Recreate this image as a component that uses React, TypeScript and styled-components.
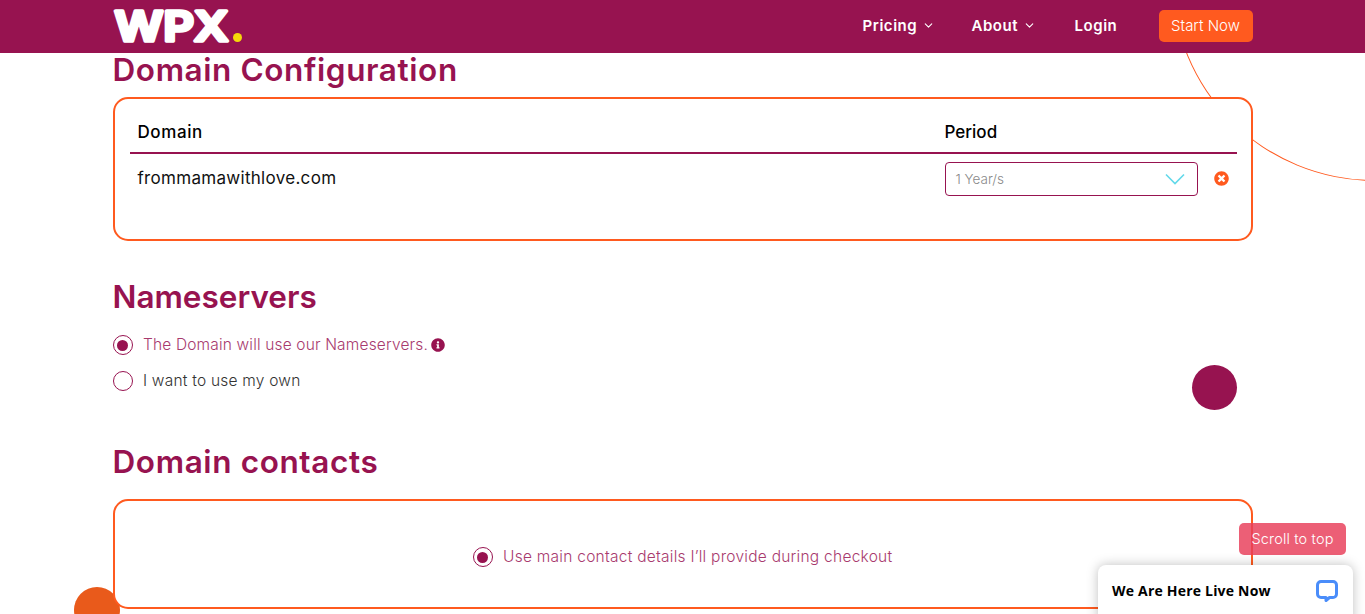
import React from "react";
import styled, { createGlobalStyle } from "styled-components";
import { FaTimesCircle, FaInfoCircle } from "react-icons/fa";
import { ChevronDown } from "lucide-react";

const PURPLE = "#971350";
const ORANGE = "#ff5a1f";
const SANS = `Inter, "Liberation Sans", sans-serif`;

const Global = createGlobalStyle`
  html, body { margin: 0; padding: 0; background: #fff; }
  body { font-family: ${SANS}; overflow: hidden; }
  * { box-sizing: border-box; }
`;

const Page = styled.div`
  position: relative;
  height: 614px;
  overflow: hidden;
`;
const Header = styled.header`
  position: relative;
  z-index: 3;
  height: 53px;
  background: ${PURPLE};
`;
const HeaderInner = styled.div`
  width: 1140px;
  height: 100%;
  margin: 0 auto;
  display: flex;
  align-items: center;
  justify-content: space-between;
`;
const Logo = styled.svg`
  display: block;
  width: 130px;
  height: 53px;
  overflow: visible;
`;
const Nav = styled.nav`
  display: flex;
  align-items: center;
  padding-bottom: 1px;
  margin-top: -1px;
`;
const NavItem = styled.a<{ $w: number }>`
  display: flex;
  align-items: center;
  gap: 5px;
  width: ${(p) => p.$w}px;
  color: #fff;
  font-size: 15px;
  font-weight: 600;
  letter-spacing: 0.55px;
`;
const StartButton = styled.a`
  display: flex;
  align-items: center;
  justify-content: center;
  width: 94px;
  height: 32px;
  border-radius: 5px;
  background: ${ORANGE};
  color: #fff;
  font-size: 15px;
  font-weight: 300;
`;
const Main = styled.main`
  position: relative;
  z-index: 2;
  width: 1140px;
  margin: 0 auto;
`;
const Heading = styled.h2<{ $mt?: number; $ls: number }>`
  margin: ${(p) => p.$mt ?? 0}px 0 0;
  color: ${PURPLE};
  font-size: 31.5px;
  line-height: 34px;
  font-weight: 600;
  letter-spacing: ${(p) => p.$ls}px;
`;
const Card = styled.section<{ $h: number; $mt: number }>`
  height: ${(p) => p.$h}px;
  margin-top: ${(p) => p.$mt}px;
  border: 2px solid ${ORANGE};
  border-radius: 15px;
  background: #fff;
`;
const DomainCard = styled(Card)`
  padding: 0 15px;
`;
const Grid = styled.div`
  display: grid;
  grid-template-columns: 807px 269px 1fr;
`;
const HeadCell = styled.div<{ $ls?: number }>`
  height: 55px;
  padding: 20px 8px 0;
  border-bottom: 2px solid ${PURPLE};
  color: #000;
  font-size: 17px;
  line-height: 26px;
  font-weight: 500;
  letter-spacing: ${(p) => p.$ls ?? 0}px;
`;
const Cell = styled.div<{ $pt: number }>`
  padding: ${(p) => p.$pt}px 8px 0;
  color: #111;
  font-size: 17px;
  line-height: 34px;
  letter-spacing: 0.3px;
`;
const Select = styled.div`
  width: 253px;
  height: 34px;
  padding: 0 12px 0 10px;
  display: flex;
  align-items: center;
  justify-content: space-between;
  border: 1px solid ${PURPLE};
  border-radius: 4px;
  color: #8a8a8a;
  font-size: 13.5px;
  font-weight: 300;
  letter-spacing: 0;
`;
const RemoveIcon = styled(FaTimesCircle)`
  display: block;
  width: 15px;
  height: 15px;
  color: ${ORANGE};
`;
const RadioList = styled.div`
  display: flex;
  flex-direction: column;
  gap: 16px;
  margin-top: 21px;
`;
const RadioRow = styled.label`
  display: flex;
  align-items: center;
  gap: 10.5px;
  height: 20px;
`;
const RadioMark = styled.span<{ $on?: boolean }>`
  position: relative;
  display: block;
  flex: none;
  width: 20px;
  height: 20px;
  border: 1.5px solid ${PURPLE};
  border-radius: 50%;
  background: #fff;
  &::after {
    content: "";
    display: ${(p) => (p.$on ? "block" : "none")};
    position: absolute;
    inset: 3.5px;
    border-radius: 50%;
    background: ${PURPLE};
  }
`;
const RadioText = styled.span<{ $on?: boolean; $ls: number }>`
  padding-bottom: 2px;
  color: ${(p) => (p.$on ? "#a83a6e" : "#333")};
  font-size: 15.5px;
  font-weight: 300;
  letter-spacing: ${(p) => p.$ls}px;
`;
const InfoIcon = styled(FaInfoCircle)`
  display: block;
  width: 14px;
  height: 14px;
  margin: -1px 0 0 -7px;
  color: ${PURPLE};
`;
const ContactCard = styled(Card)`
  display: flex;
  align-items: center;
  padding: 6px 0 0 358px;
`;
const Arc = styled.div`
  position: absolute;
  z-index: 1;
  left: 1172px;
  top: -223px;
  width: 405px;
  height: 404px;
  border: 1px solid ${ORANGE};
  border-radius: 50%;
`;
const Dot = styled.div<{ $x: number; $y: number; $d: number; $c: string }>`
  position: absolute;
  z-index: 1;
  left: ${(p) => p.$x}px;
  top: ${(p) => p.$y}px;
  width: ${(p) => p.$d}px;
  height: ${(p) => p.$d}px;
  border-radius: 50%;
  background: ${(p) => p.$c};
`;
const ScrollTop = styled.div`
  position: absolute;
  z-index: 4;
  left: 1239px;
  top: 523px;
  width: 107px;
  height: 32px;
  padding-bottom: 2px;
  display: flex;
  align-items: center;
  justify-content: center;
  border-radius: 5px;
  background: rgba(232, 62, 90, 0.83);
  color: #fff;
  font-size: 14.5px;
  font-weight: 300;
  letter-spacing: 0.15px;
`;
const Chat = styled.div`
  position: absolute;
  z-index: 5;
  left: 1098px;
  top: 565px;
  width: 255px;
  height: 60px;
  padding: 0 14px;
  display: flex;
  align-items: flex-start;
  justify-content: space-between;
  border-radius: 8px 8px 0 0;
  background: #fff;
  box-shadow: 0 0 12px rgba(0, 0, 0, 0.25);
`;
const ChatText = styled.span`
  margin-top: 16px;
  color: #000;
  font-family: "Open Sans", sans-serif;
  font-size: 14px;
  line-height: 20px;
  font-weight: 700;
  letter-spacing: 0.2px;
`;
const ChatIcon = styled.svg`
  display: block;
  width: 24px;
  height: 24px;
  margin-top: 13px;
`;

export default function App() {
  return (
    <Page>
      <Global />
      <Header>
        <HeaderInner>
          <Logo viewBox="0 0 130 53">
            <text
              x="1.5"
              y="40.5"
              fill="#fff"
              stroke="#fff"
              strokeWidth="3.5"
              strokeLinejoin="round"
              fontFamily="Inter, sans-serif"
              fontWeight="600"
              fontSize="41"
              textLength="114"
              lengthAdjust="spacingAndGlyphs"
            >
              WPX
            </text>
            <circle cx="124.5" cy="37.5" r="4.5" fill="#f5d90a" />
          </Logo>
          <Nav>
            <NavItem $w={109}>
              Pricing <ChevronDown size={13} strokeWidth={2} />
            </NavItem>
            <NavItem $w={103}>
              About <ChevronDown size={13} strokeWidth={2} />
            </NavItem>
            <NavItem $w={84}>Login</NavItem>
            <StartButton>Start Now</StartButton>
          </Nav>
        </HeaderInner>
      </Header>
      <Arc />
      <Dot $x={1192} $y={365} $d={45} $c={PURPLE} />
      <Dot $x={74} $y={587} $d={46} $c="#e95a1b" />
      <Main>
        <Heading $ls={0.6}>Domain Configuration</Heading>
        <DomainCard $h={144} $mt={10}>
          <Grid>
            <HeadCell $ls={0.6}>Domain</HeadCell>
            <HeadCell>Period</HeadCell>
            <HeadCell />
            <Cell $pt={7}>frommamawithlove.com</Cell>
            <Cell $pt={8}>
              <Select>
                1 Year/s
                <svg width="20" height="12" viewBox="0 0 20 12" fill="none">
                  <polyline points="1,1.5 10,10.5 19,1.5" stroke="#62d9ea" strokeWidth="1.6" />
                </svg>
              </Select>
            </Cell>
            <Cell $pt={17}>
              <RemoveIcon />
            </Cell>
          </Grid>
        </DomainCard>
        <Heading $mt={39} $ls={0}>Nameservers</Heading>
        <RadioList>
          <RadioRow>
            <RadioMark $on />
            <RadioText $on $ls={0.16}>The Domain will use our Nameservers.</RadioText>
            <InfoIcon />
          </RadioRow>
          <RadioRow>
            <RadioMark />
            <RadioText $ls={0.22}>I want to use my own</RadioText>
          </RadioRow>
        </RadioList>
        <Heading $mt={54} $ls={0.62}>Domain contacts</Heading>
        <ContactCard $h={110} $mt={20}>
          <RadioRow>
            <RadioMark $on />
            <RadioText $on $ls={0.26}>Use main contact details I’ll provide during checkout</RadioText>
          </RadioRow>
        </ContactCard>
      </Main>
      <ScrollTop>Scroll to top</ScrollTop>
      <Chat>
        <ChatText>We Are Here Live Now</ChatText>
        <ChatIcon viewBox="0 0 24 24" fill="none">
          <path
            d="M6 3.5h12a3.5 3.5 0 0 1 3.5 3.5v9a3.5 3.5 0 0 1-3.5 3.5h-3.5l-3.5 3v-3H6A3.5 3.5 0 0 1 2.5 16V7A3.5 3.5 0 0 1 6 3.5z"
            stroke="#4a8dfa"
            strokeWidth="3"
            strokeLinejoin="round"
          />
        </ChatIcon>
      </Chat>
    </Page>
  );
}
